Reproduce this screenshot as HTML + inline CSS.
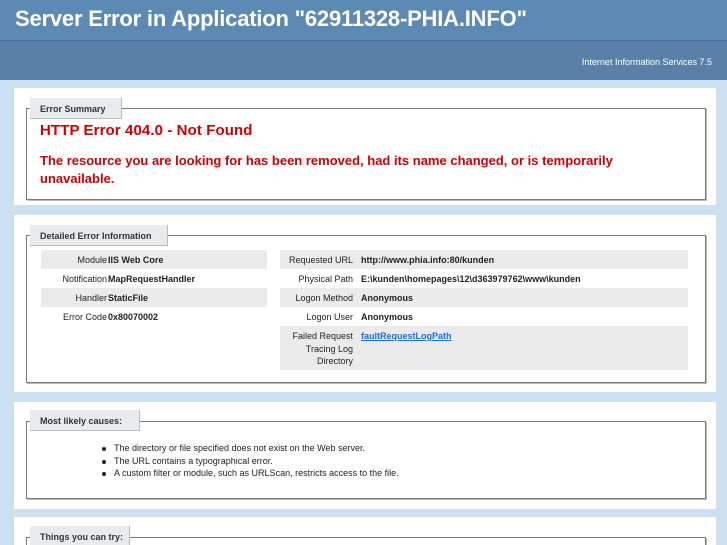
<!DOCTYPE html>
<html><head><meta charset="utf-8"><style>
*{margin:0;padding:0;box-sizing:border-box}
html,body{width:727px;height:545px;overflow:hidden}
body{background:#cbe0f0;font-family:"Liberation Sans",sans-serif;position:relative}
.a{position:absolute}
#h1{left:0;top:0;width:727px;height:41px;background:#5d89b5;border-bottom:1px solid #4a6f96}
#h1 span{position:absolute;left:15px;top:6px;color:#fff;font-size:22px;font-weight:bold;letter-spacing:-0.2px;white-space:nowrap}
#h2{left:0;top:41px;width:727px;height:39px;background:#5a80a9}
#h2 span{position:absolute;right:15px;top:16px;color:#fff;font-size:9px}
.panel{position:absolute;left:14px;width:702px;background:#fff}
.fs{position:absolute;left:26px;width:680px;border:1px solid #7a7a7a;box-shadow:1px 1px 0 #bbb}
.lg{position:absolute;left:30px;height:21px;background:#e8ebee;border-right:1px solid #bbb;border-bottom:1px solid #bbb;font-size:9px;font-weight:bold;color:#333;padding:6px 0 0 10px;white-space:nowrap}
.red{color:#cc0000;font-weight:bold;white-space:nowrap}
.row{position:absolute;height:19px;font-size:9px;color:#222;white-space:nowrap}
.g{background:#ebebeb}
.l{position:absolute;text-align:right;top:5px}
.v{position:absolute;top:5px;font-weight:bold}
ul{position:absolute;left:114px;font-size:9px;color:#222;list-style:none}
ul li{height:12.5px;position:relative;white-space:nowrap}
ul li:before{content:"";position:absolute;left:-12px;top:4px;width:4px;height:4px;border-radius:50%;background:#222}
</style></head><body>
<div id="h1" class="a"><span>Server Error in Application "62911328-PHIA.INFO"</span></div>
<div id="h2" class="a"><span>Internet Information Services 7.5</span></div>

<div class="panel" style="top:88px;height:117px"></div>
<div class="fs" style="top:108px;height:92px"></div>
<div class="lg" style="top:98px;width:92px">Error Summary</div>
<div class="a red" style="left:40px;top:122px;font-size:15px;letter-spacing:0.1px">HTTP Error 404.0 - Not Found</div>
<div class="a red" style="left:40px;top:152px;font-size:13px;line-height:18px">The resource you are looking for has been removed, had its name changed, or is temporarily<br>unavailable.</div>

<div class="panel" style="top:215px;height:177px"></div>
<div class="fs" style="top:235px;height:148px"></div>
<div class="lg" style="top:225px;width:138px">Detailed Error Information</div>
<div class="row g" style="left:41px;top:250px;width:226px"><span class="l" style="right:160px">Module</span><span class="v" style="left:67px">IIS Web Core</span></div>
<div class="row" style="left:41px;top:269px;width:226px"><span class="l" style="right:160px">Notification</span><span class="v" style="left:67px">MapRequestHandler</span></div>
<div class="row g" style="left:41px;top:288px;width:226px"><span class="l" style="right:160px">Handler</span><span class="v" style="left:67px">StaticFile</span></div>
<div class="row" style="left:41px;top:307px;width:226px"><span class="l" style="right:160px">Error Code</span><span class="v" style="left:67px">0x80070002</span></div>
<div class="row g" style="left:280px;top:250px;width:408px"><span class="l" style="right:335px">Requested URL</span><span class="v" style="left:81px">http://www.phia.info:80/kunden</span></div>
<div class="row" style="left:280px;top:269px;width:408px"><span class="l" style="right:335px">Physical Path</span><span class="v" style="left:81px">E:\kunden\homepages\12\d363979762\www\kunden</span></div>
<div class="row g" style="left:280px;top:288px;width:408px"><span class="l" style="right:335px">Logon Method</span><span class="v" style="left:81px">Anonymous</span></div>
<div class="row" style="left:280px;top:307px;width:408px"><span class="l" style="right:335px">Logon User</span><span class="v" style="left:81px">Anonymous</span></div>
<div class="row g" style="left:280px;top:326px;width:408px;height:44px"><span class="l" style="right:335px;line-height:12.7px;top:4px">Failed Request<br>Tracing Log<br>Directory</span><span style="position:absolute;left:81px;top:5px;color:#1a6ee0;text-decoration:underline;font-weight:bold">faultRequestLogPath</span></div>

<div class="panel" style="top:402px;height:107px"></div>
<div class="fs" style="top:421px;height:78px"></div>
<div class="lg" style="top:410px;width:110px">Most likely causes:</div>
<ul style="top:443px"><li>The directory or file specified does not exist on the Web server.</li><li>The URL contains a typographical error.</li><li>A custom filter or module, such as URLScan, restricts access to the file.</li></ul>

<div class="panel" style="top:517px;height:40px"></div>
<div class="fs" style="top:537px;height:30px"></div>
<div class="lg" style="top:526px;width:100px">Things you can try:</div>
</body></html>
